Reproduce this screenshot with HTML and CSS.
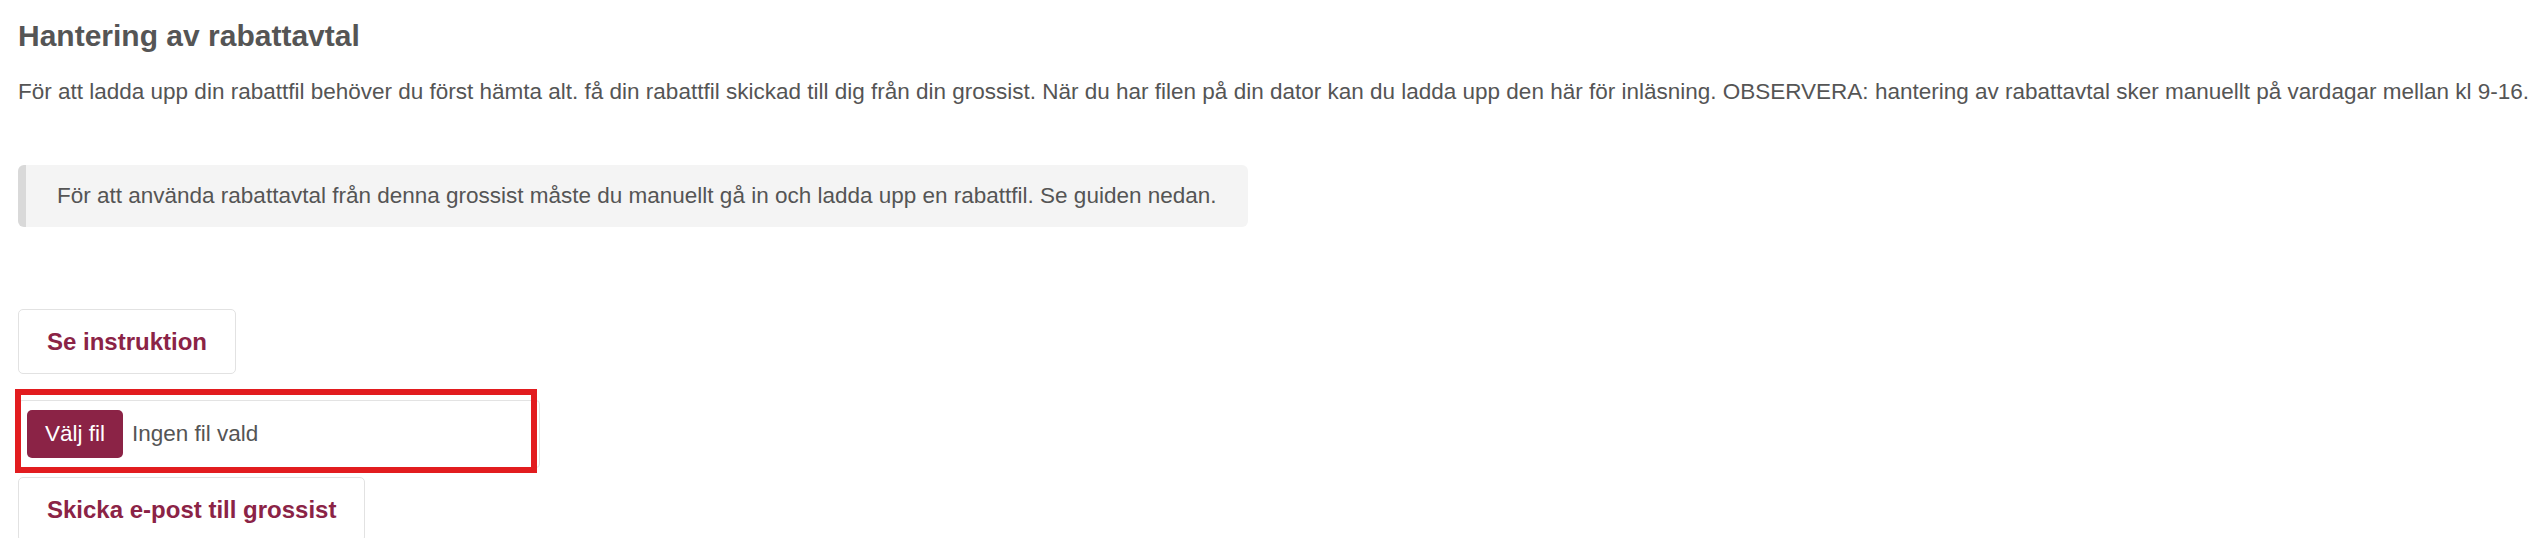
FILE: index.html
```html
<!DOCTYPE html>
<html lang="sv">
<head>
<meta charset="utf-8">
<title>Hantering av rabattavtal</title>
<link rel="stylesheet" href="styles.css">
</head>
<body>
<main class="page">
  <h3 class="title">Hantering av rabattavtal</h3>
  <p class="intro">För att ladda upp din rabattfil behöver du först hämta alt. få din rabattfil skickad till dig från din grossist. När du har filen på din dator kan du ladda upp den här för inläsning. OBSERVERA: hantering av rabattavtal sker manuellt på vardagar mellan kl 9-16.</p>
  <div class="notice">För att använda rabattavtal från denna grossist måste du manuellt gå in och ladda upp en rabattfil. Se guiden nedan.</div>
  <div class="actions">
    <button class="btn-outline" type="button">Se instruktion</button>
    <div class="file-wrap">
      <label class="file-input">
        <span class="file-btn">Välj fil</span>
        <span class="file-name">Ingen fil vald</span>
      </label>
      <div class="highlight"></div>
    </div>
    <button class="btn-outline" type="button">Skicka e-post till grossist</button>
  </div>
</main>
</body>
</html>
```
FILE: styles.css
```css
html, body {
  margin: 0;
  padding: 0;
  background: #ffffff;
}

body {
  font-family: "Liberation Sans", Arial, sans-serif;
  color: #555555;
}

.page {
  padding: 0 0 0 18px;
}

.title {
  margin: 19px 0 0 0;
  font-size: 30px;
  line-height: 33px;
  font-weight: bold;
  color: #555555;
}

.intro {
  margin: 24px 0 0 0;
  font-size: 22.5px;
  line-height: 31.4px;
  color: #555555;
}

.notice {
  display: inline-block;
  margin-top: 58px;
  padding: 15px 31px 15px 31px;
  background: #f4f4f4;
  border-left: 8px solid #d9d9d9;
  border-radius: 6px;
  font-size: 22.5px;
  line-height: 31.4px;
  color: #555555;
}

.actions {
  display: flex;
  flex-direction: column;
  align-items: flex-start;
  margin-top: 82px;
}

.btn-outline {
  font-family: "Liberation Sans", Arial, sans-serif;
  font-size: 24px;
  line-height: 33px;
  font-weight: bold;
  color: #8b2346;
  background: #ffffff;
  border: 1px solid #e2e2e2;
  border-radius: 5px;
  padding: 15px 28px;
  margin: 0;
  cursor: pointer;
}

.file-wrap {
  position: relative;
  margin-top: 26px;
  margin-bottom: 9px;
}

.file-input {
  display: flex;
  align-items: center;
  width: 502px;
  padding: 9px 10px 9px 8px;
  border: 1px solid #e3e3e3;
  border-radius: 4px;
  font-size: 22.5px;
}

.file-btn {
  display: inline-block;
  height: 48px;
  line-height: 48px;
  padding: 0 18px;
  background: #8b2346;
  color: #ffffff;
  border-radius: 5px;
}

.file-name {
  margin-left: 9px;
  color: #555555;
}

.highlight {
  position: absolute;
  left: -3px;
  top: -11px;
  width: 510px;
  height: 72px;
  border: 6px solid #e21c1f;
  pointer-events: none;
}
```
